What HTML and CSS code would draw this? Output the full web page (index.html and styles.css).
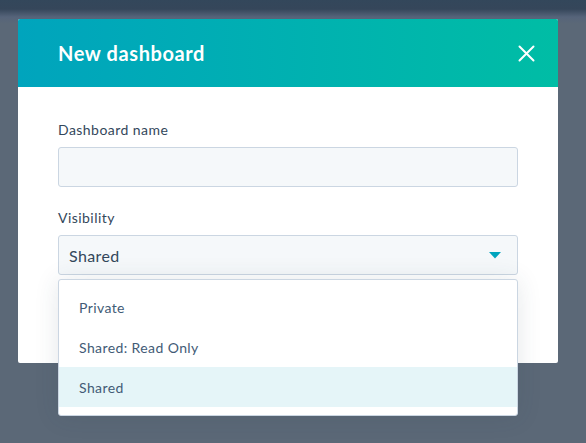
FILE: index.html
```html
<!DOCTYPE html>
<html lang="en">
<head>
<meta charset="utf-8">
<title>New dashboard</title>
<link rel="stylesheet" href="styles.css">
</head>
<body>
<div class="backdrop">
  <div class="modal">
    <div class="modal-header">
      <h3 class="modal-title">New dashboard</h3>
      <button class="close-btn" aria-label="Close">
        <svg width="17" height="17" viewBox="0 0 17 17"><path d="M1.5 1.5 L15.5 15.5 M15.5 1.5 L1.5 15.5" stroke="#fff" stroke-width="2" stroke-linecap="round" fill="none"/></svg>
      </button>
    </div>
    <div class="modal-body">
      <div class="field">
        <label class="field-label">Dashboard name</label>
        <div class="text-input"></div>
      </div>
      <div class="field">
        <label class="field-label">Visibility</label>
        <div class="select-wrap">
          <div class="select">
            <span class="select-value">Shared</span>
            <svg class="caret" width="12" height="7" viewBox="0 0 12 7"><path d="M0 0 H12 L6 6.5 Z" fill="#00a4bd"/></svg>
          </div>
          <ul class="menu">
            <li class="menu-item">Private</li>
            <li class="menu-item">Shared: Read Only</li>
            <li class="menu-item is-selected">Shared</li>
          </ul>
        </div>
      </div>
    </div>
  </div>
</div>
</body>
</html>
```
FILE: styles.css
```css
html, body {
  margin: 0;
  padding: 0;
}
body {
  width: 586px;
  height: 443px;
  overflow: hidden;
  font-family: Lato, "Open Sans", sans-serif;
  color: #33475b;
}
.backdrop {
  height: 443px;
  padding: 19px 0 0 18px;
  box-sizing: border-box;
  background: linear-gradient(to bottom, #33475b 0, #35465a 9px, #56647a 17px, #5b6877 24px, #5b6877 100%);
}
.modal {
  width: 540px;
  background: #fff;
  border-radius: 2px;
}
.modal-header {
  height: 68px;
  box-sizing: border-box;
  padding: 0 23px 0 40px;
  display: flex;
  align-items: center;
  justify-content: space-between;
  background: linear-gradient(to right, #00a4bd, #00bda5);
  border-radius: 2px 2px 0 0;
}
.modal-title {
  margin: 0;
  font-size: 20px;
  font-weight: 700;
  letter-spacing: 0.6px;
  color: #fff;
  line-height: 24px;
}
.close-btn {
  background: none;
  border: 0;
  padding: 0;
  width: 17px;
  height: 17px;
  display: flex;
}
.modal-body {
  padding: 33px 40px 88px;
  display: flex;
  flex-direction: column;
  gap: 21px;
}
.field {
  display: flex;
  flex-direction: column;
  gap: 7px;
}
.field-label {
  font-size: 14px;
  line-height: 20px;
  letter-spacing: 0.45px;
  color: #33475b;
}
.text-input {
  height: 40px;
  box-sizing: border-box;
  border: 1px solid #cbd6e2;
  border-radius: 3px;
  background: #f5f8fa;
}
.select-wrap {
  position: relative;
}
.select {
  height: 40px;
  box-sizing: border-box;
  border: 1px solid #cbd6e2;
  border-radius: 3px;
  background: #f5f8fa;
  display: flex;
  align-items: center;
  justify-content: space-between;
  padding: 0 16px 0 10px;
}
.select-value {
  font-size: 16px;
  letter-spacing: 0.4px;
  color: #33475b;
}
.caret {
  display: block;
  margin-top: 1px;
}
.menu {
  position: absolute;
  left: 0;
  right: 0;
  top: 44px;
  margin: 0;
  padding: 7px 0 8px;
  list-style: none;
  background: #fff;
  border: 1px solid #cbd6e2;
  border-radius: 3px;
  box-shadow: 0 1px 24px rgba(45, 62, 80, 0.12);
}
.menu-item {
  height: 40px;
  display: flex;
  align-items: center;
  padding-left: 20px;
  font-size: 14px;
  letter-spacing: 0.4px;
  color: #425b76;
}
.menu-item.is-selected {
  background: #e5f5f8;
}
```
